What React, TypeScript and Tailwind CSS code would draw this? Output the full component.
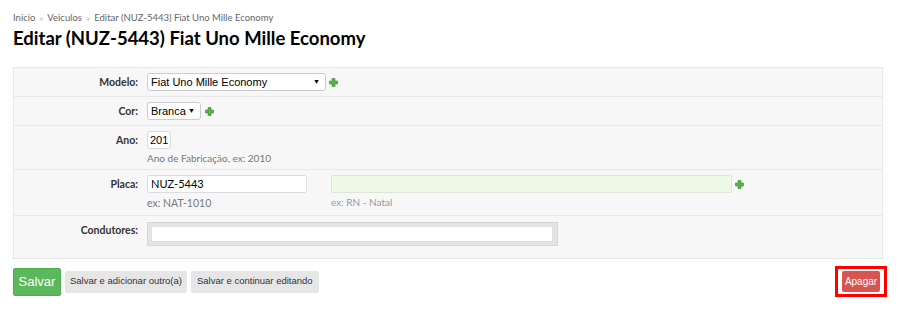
import React from 'react'

function Plus() {
  return (
    <svg width="9" height="9" viewBox="0 0 9 9" className="shrink-0">
      <path d="M3 0.5h3v2.5h2.5v3H6v2.5H3V6H0.5V3H3z" fill="#5cae4c" stroke="#3d8a34" strokeWidth="0.6" />
    </svg>
  )
}

function Row({ label, children, last }: { label: string; children: React.ReactNode; last?: boolean }) {
  return (
    <div className={`flex ${last ? '' : 'border-b border-[#e8e8e8]'} pt-[5px] pb-[5px]`}>
      <div className="w-[126px] shrink-0 pr-[2px] text-right text-[10.5px] font-bold text-[#333] leading-[18px]">
        {label}
      </div>
      <div className="pl-[7px] flex-1">{children}</div>
    </div>
  )
}

export default function App() {
  return (
    <div className="w-[900px] h-[316px] bg-white px-[13px] pt-[11px] font-['Lato',sans-serif] text-[#333]">
      <div className="text-[9.5px] text-[#666] leading-[14px]">
        Inicio <span className="text-[#aaa] text-[8px] mx-[2px]">»</span> Veiculos{' '}
        <span className="text-[#aaa] text-[8px] mx-[2px]">»</span> Editar (NUZ-5443) Fiat Uno Mille Economy
      </div>
      <h1 className="text-[18.5px] font-bold text-black leading-[24px] mt-[1px]">Editar (NUZ-5443) Fiat Uno Mille Economy</h1>

      <div className="mt-[17px] w-[870px] bg-[#f7f7f7] border border-[#e8e8e8]">
        <Row label="Modelo:">
          <div className="flex items-center gap-[3px]">
            <div className="w-[179px] h-[18px] bg-white border border-[#ccc] rounded-[3px] flex items-center justify-between px-[3px] text-[11px] font-['Liberation_Sans',Arial,sans-serif] text-black">
              <span>Fiat Uno Mille Economy</span>
              <span className="text-[7px] mr-[2px]">▼</span>
            </div>
            <Plus />
          </div>
        </Row>
        <Row label="Cor:">
          <div className="flex items-center gap-[4px]">
            <div className="w-[54px] h-[18px] bg-white border border-[#ccc] rounded-[3px] flex items-center justify-between px-[3px] text-[11px] font-['Liberation_Sans',Arial,sans-serif] text-black">
              <span>Branca</span>
              <span className="text-[7px] mr-[2px]">▼</span>
            </div>
            <Plus />
          </div>
        </Row>
        <Row label="Ano:">
          <div className="w-[24px] h-[18px] bg-white border border-[#ddd] rounded-[3px] flex items-center px-[2px] text-[11px] font-['Liberation_Sans',Arial,sans-serif] text-black">
            201
          </div>
          <div className="text-[10px] text-[#777] mt-[3px] leading-[12px]">Ano de Fabricação, ex: 2010</div>
        </Row>
        <Row label="Placa:">
          <div className="flex items-start">
            <div className="w-[160px] shrink-0">
              <div className="h-[18px] bg-white border border-[#ddd] rounded-[2px] flex items-center px-[3px] text-[11px] text-black">
                NUZ-5443
              </div>
              <div className="text-[10.5px] text-[#777] mt-[3px] leading-[14px]">ex: NAT-1010</div>
            </div>
            <div className="ml-[24px]">
              <div className="flex items-center gap-[3px]">
                <div className="w-[401px] h-[18px] bg-[#eef9e8] border border-[#dbe6d6] rounded-[2px]" />
                <Plus />
              </div>
              <div className="text-[10px] text-[#999] mt-[2px] leading-[14px]">ex: RN - Natal</div>
            </div>
          </div>
        </Row>
        <Row label="Condutores:" last>
          <div className="w-[411px] h-[24px] bg-[#e4e4e4] border border-[#d6d6d6] p-[3px] pr-[4px] mt-[1px] mb-[7px]">
            <div className="h-full bg-white border border-[#e0e0e0]" />
          </div>
        </Row>
      </div>

      <div className="mt-[7px] flex items-center justify-between w-[874px] font-['Liberation_Sans',Arial,sans-serif]">
        <div className="flex items-center gap-[4px]">
          <button className="w-[48px] h-[28px] bg-[#5cb85c] text-white text-[13px] rounded-[2px] border border-[#4cae4c]">Salvar</button>
          <button className="h-[22px] px-[5px] bg-[#e6e6e6] text-[#333] text-[9.5px] rounded-[2px]">Salvar e adicionar outro(a)</button>
          <button className="h-[22px] px-[6px] bg-[#e6e6e6] text-[#333] text-[9.5px] rounded-[2px]">Salvar e continuar editando</button>
        </div>
        <div className="border-[3px] border-[#f00] px-[4px] py-[2px]">
          <button className="h-[21px] w-[38px] bg-[#d9534f] text-white text-[10px] rounded-[2px] block">Apagar</button>
        </div>
      </div>
    </div>
  )
}
